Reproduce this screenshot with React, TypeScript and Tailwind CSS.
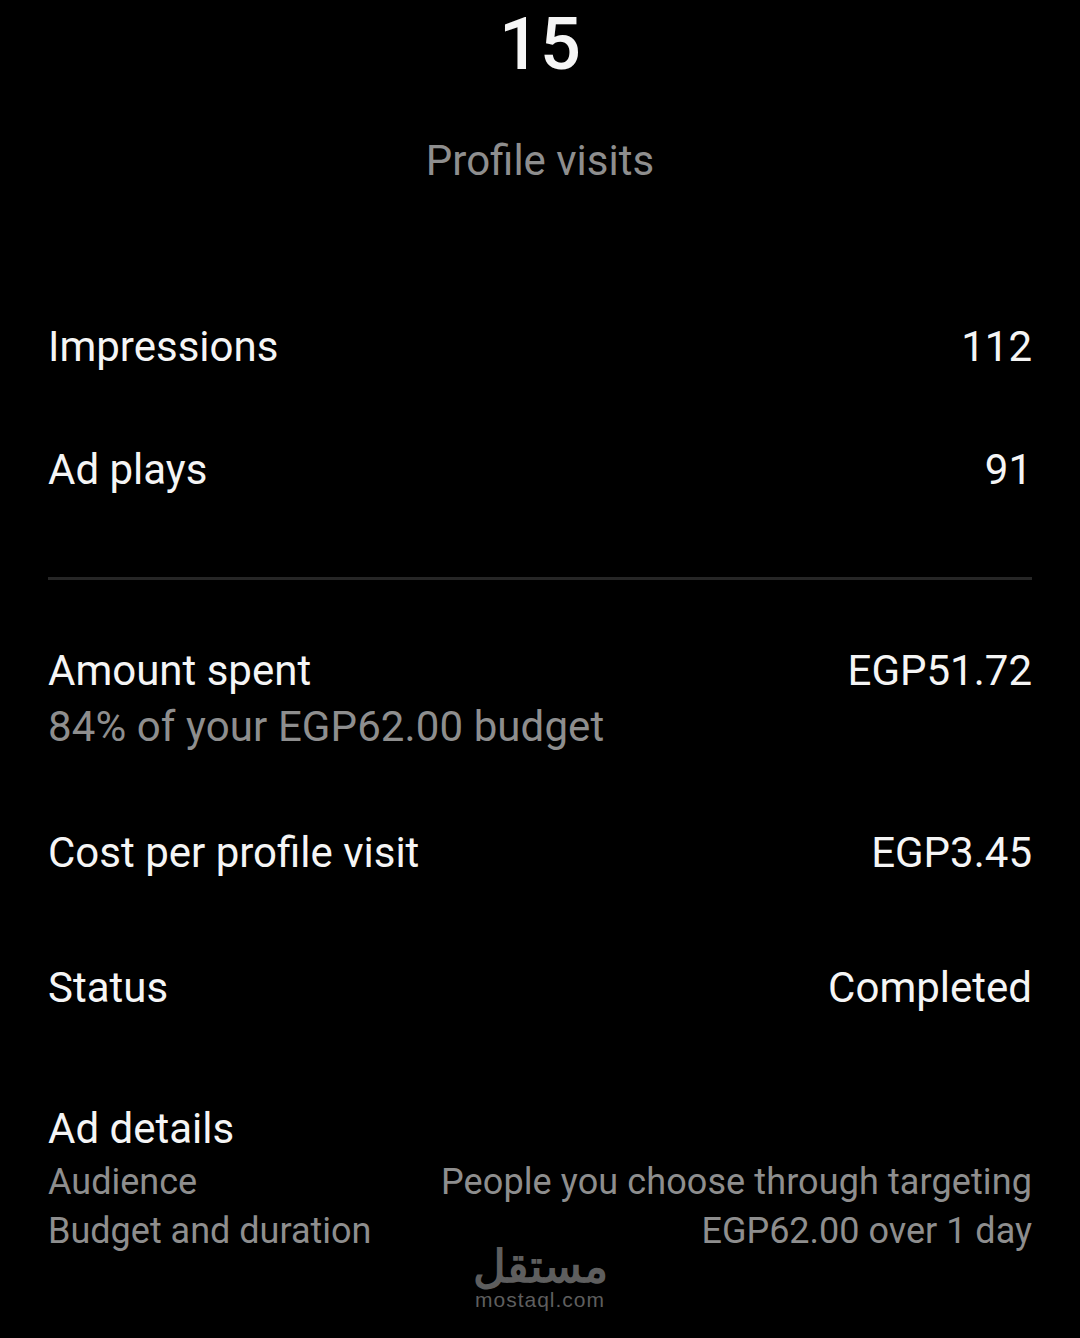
function Row({ label, value, className }: { label: string; value: string; className: string }) {
  return (
    <div className={`flex justify-between text-[42px] leading-[48px] text-[#f5f5f5] ${className}`}>
      <span>{label}</span>
      <span>{value}</span>
    </div>
  );
}

export default function App() {
  return (
    <div className="relative w-[1080px] h-[1338px] bg-black overflow-hidden font-['Roboto',sans-serif]">
      <div className="flex flex-col px-[48px]">
        <div className="text-center text-[72px] leading-[72px] font-medium text-[#f5f5f5] mt-[9px]">15</div>
        <div className="text-center text-[42px] leading-[48px] text-[#8e8e8e] mt-[56px]">Profile visits</div>
        <Row label="Impressions" value="112" className="mt-[138px]" />
        <Row label="Ad plays" value="91" className="mt-[75px]" />
        <div className="h-[3px] bg-[#262626] mt-[83px]" />
        <Row label="Amount spent" value="EGP51.72" className="mt-[67px]" />
        <div className="text-[42px] leading-[48px] text-[#8e8e8e] mt-[8px] tracking-[0.1px]">84% of your EGP62.00 budget</div>
        <Row label="Cost per profile visit" value="EGP3.45" className="mt-[78px]" />
        <Row label="Status" value="Completed" className="mt-[87px]" />
        <Row label="Ad details" value="" className="mt-[93px]" />
        <div className="flex justify-between text-[36px] leading-[49px] text-[#8e8e8e] mt-[5px]">
          <div className="flex flex-col"><span>Audience</span><span>Budget and duration</span></div>
          <div className="flex flex-col items-end"><span className="tracking-[0.1px]">People you choose through targeting</span><span>EGP62.00 over 1 day</span></div>
        </div>
      </div>
      <div className="absolute left-[470px] top-[1244px] w-[140px] flex flex-col items-center gap-[2px] text-[#5e5e5e]">
        <div className="text-[45px] leading-[42px] font-bold font-['Noto_Sans',sans-serif]">مستقل</div>
        <div className="text-[21px] leading-[24px] tracking-[1px] font-['Liberation_Sans',sans-serif]">mostaql.com</div>
      </div>
    </div>
  );
}
